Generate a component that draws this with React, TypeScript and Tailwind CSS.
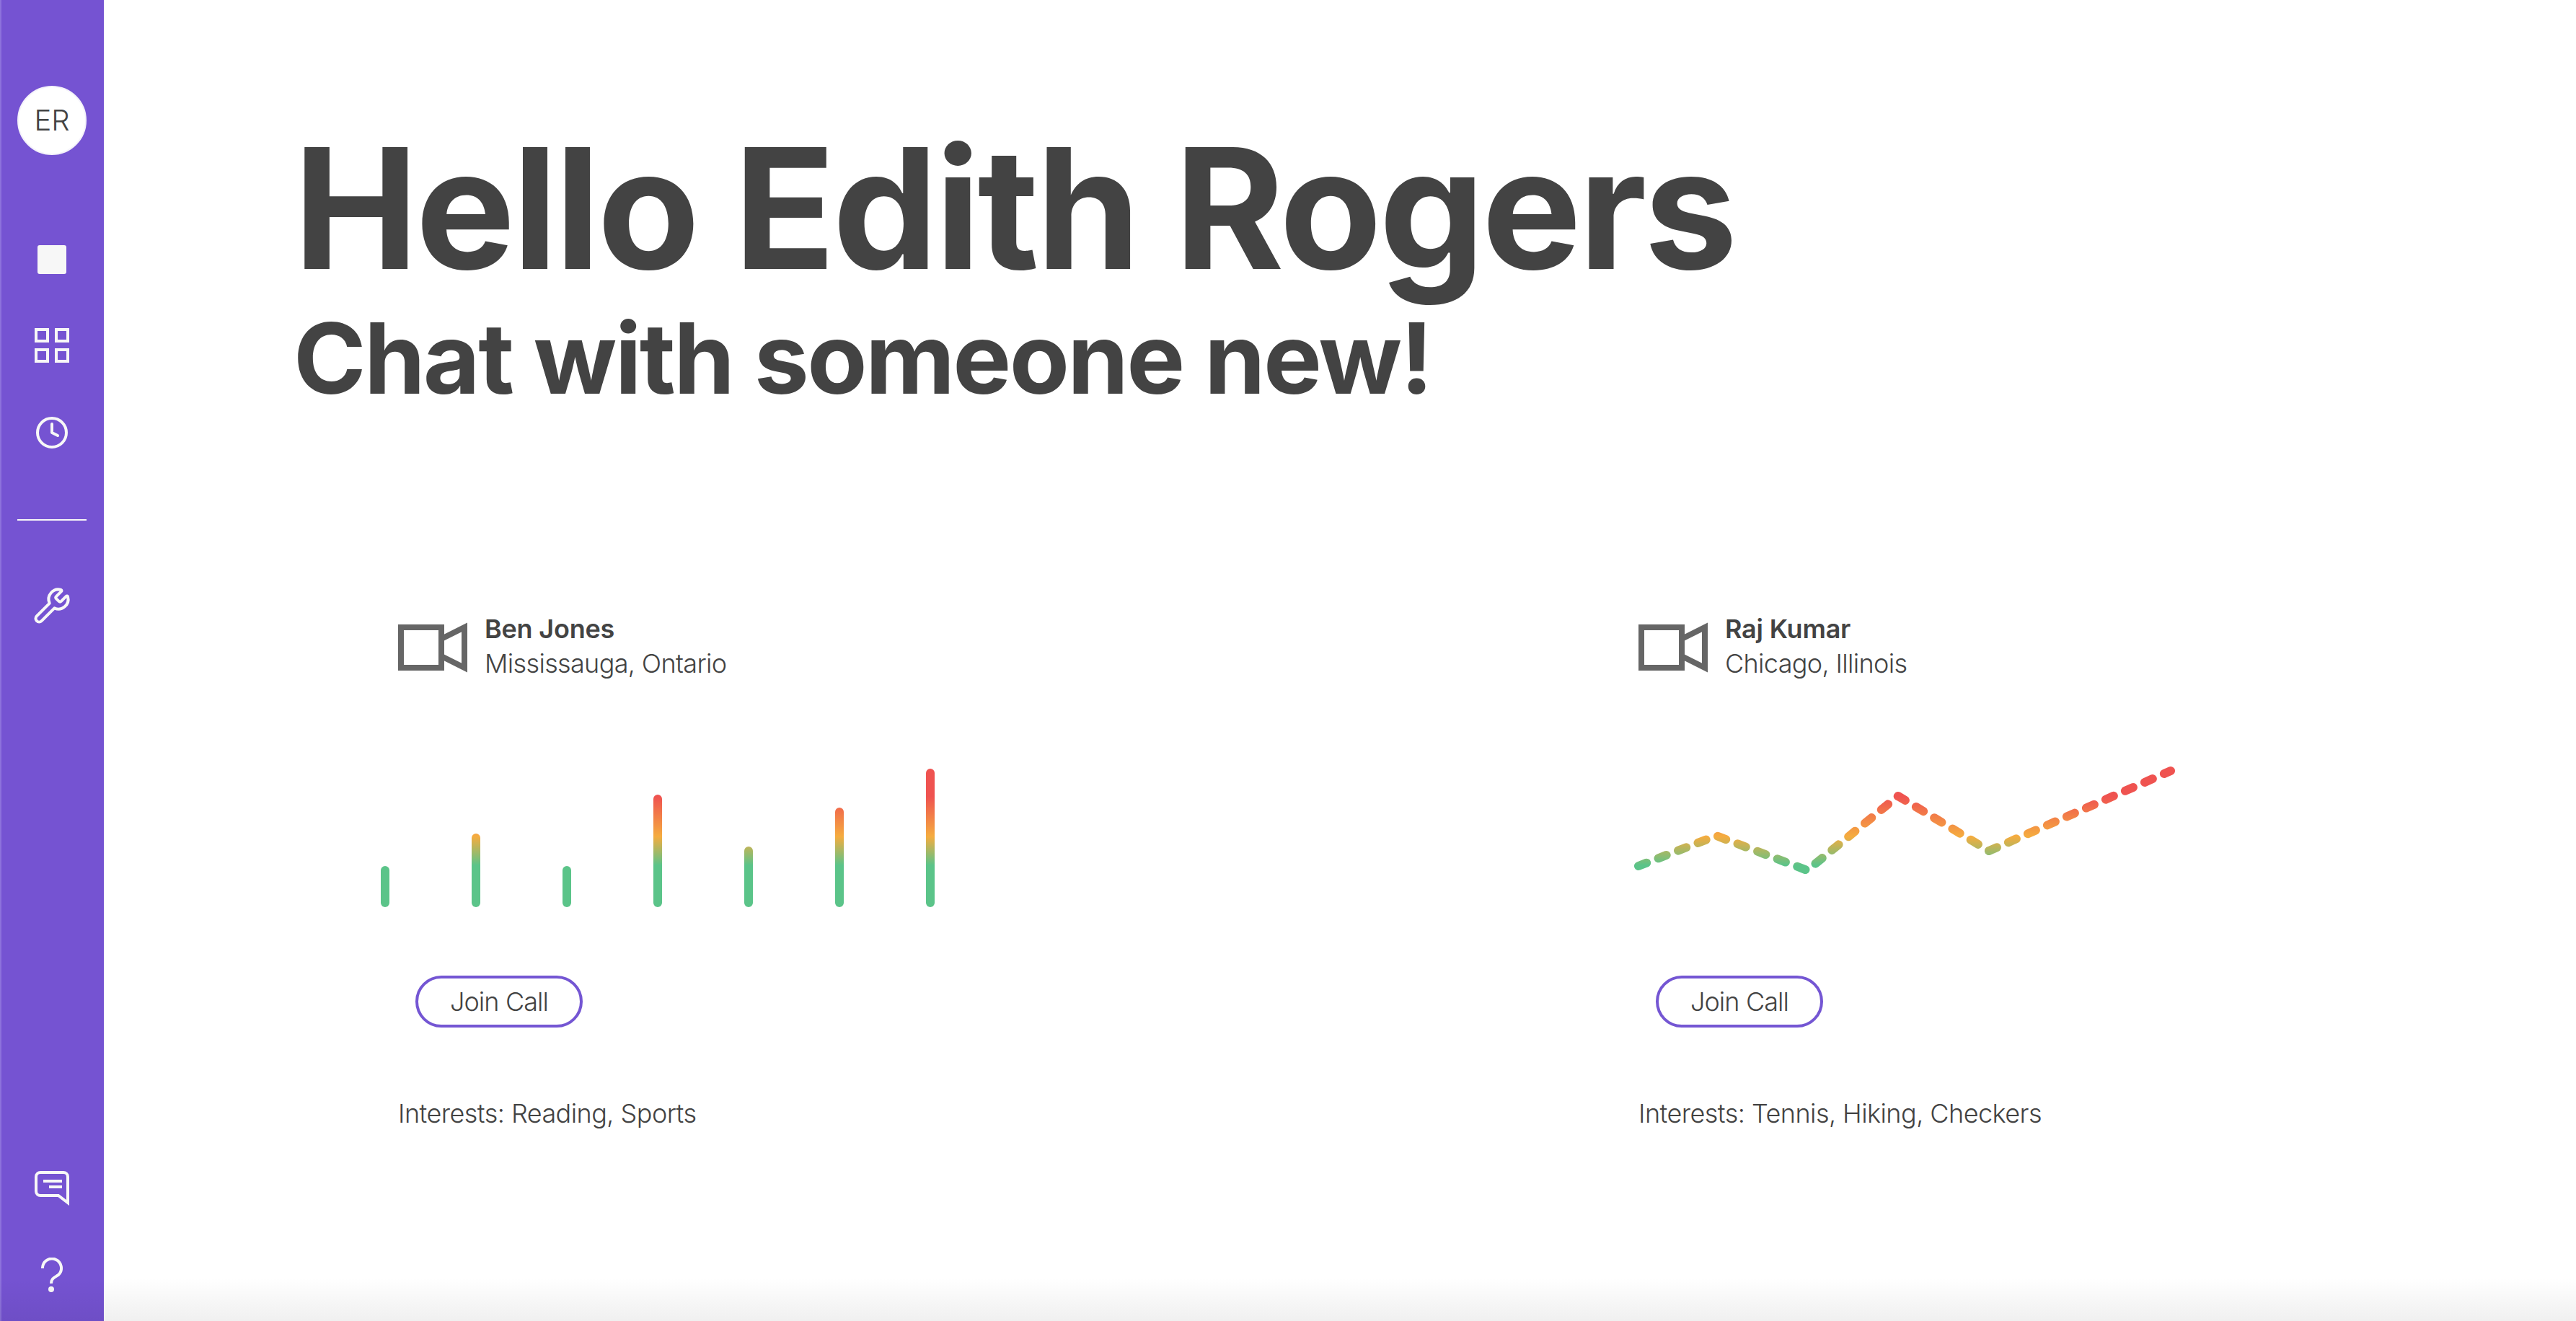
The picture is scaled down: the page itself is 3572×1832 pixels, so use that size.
import React from 'react';
import { Clock, Wrench } from 'lucide-react';

const barHeights = [57, 102, 57, 156, 84, 138, 192];

function ChartGradient({ id }: { id: string }) {
  return (
    <linearGradient id={id} gradientUnits="userSpaceOnUse" x1="0" y1="142" x2="0" y2="47">
      <stop offset="0" stopColor="#5bc489" />
      <stop offset="0.42" stopColor="#f5ac3f" />
      <stop offset="1" stopColor="#ef5350" />
    </linearGradient>
  );
}

function BarChart() {
  return (
    <svg width="780" height="210" viewBox="0 0 780 210" className="block">
      <defs>
        <ChartGradient id="barGrad" />
      </defs>
      {barHeights.map((h, i) => (
        <rect key={i} x={i * 126} y={200 - h} width="12" height={h} rx="6" fill="url(#barGrad)" />
      ))}
    </svg>
  );
}

function LineChart() {
  return (
    <svg width="780" height="210" viewBox="0 0 780 210" className="block">
      <defs>
        <ChartGradient id="lineGrad" />
      </defs>
      <polyline
        points="24,143 132,101 258,149 384,46 510,122 762,11"
        fill="none"
        stroke="url(#lineGrad)"
        strokeWidth="12"
        strokeLinecap="round"
        strokeLinejoin="round"
        strokeDasharray="12 17.5"
      />
    </svg>
  );
}

function VideoIcon() {
  return (
    <svg width="96" height="70" viewBox="0 0 96 70" fill="none" stroke="#666666" strokeWidth="8" className="shrink-0 mt-[4px]">
      <rect x="4" y="7" width="56" height="56" />
      <path d="M62 22 L92 7 V63 L62 48" />
    </svg>
  );
}

function CallCard({ name, place, interests, chart }: { name: string; place: string; interests: string; chart: React.ReactNode }) {
  return (
    <div className="w-[1720px]">
      <div className="flex items-center gap-[24px]">
        <VideoIcon />
        <div>
          <p className="text-[36px] leading-[48px] font-semibold tracking-[-0.2px]">{name}</p>
          <p className="text-[36px] leading-[48px] font-[350] tracking-[-0.65px]">{place}</p>
        </div>
      </div>
      <div className="mt-[114px] -ml-[24px]">{chart}</div>
      <button className="block ml-[24px] mt-[85px] w-[232px] h-[72px] rounded-full border-4 border-[#7456d3] text-[36px] leading-none font-[350] tracking-[-0.9px]">
        Join Call
      </button>
      <p className="mt-[95px] text-[36px] leading-[48px] font-[350] tracking-[-0.55px]">Interests: {interests}</p>
    </div>
  );
}

export default function App() {
  return (
    <div className="relative flex h-[1832px] overflow-hidden bg-white text-[#434343] font-['Inter',sans-serif]">
      {/* Sidebar */}
      <aside className="w-[144px] shrink-0 bg-[#7553d2] border-l-2 border-[#8d72dc] flex flex-col items-center pt-[119px] pb-[40px] pr-[2px]">
        <div className="w-[96px] h-[96px] rounded-full bg-white border-2 border-[#f4f2fa] flex items-center justify-center text-[40px] font-[350]">ER</div>
        <div className="mt-[125px] w-[40px] h-[40px] rounded-[3px] bg-[#f7f7f7]" />
        <svg width="48" height="48" viewBox="0 0 48 48" fill="none" stroke="#f7f7f7" strokeWidth="4" className="mt-[75px]">
          <rect x="2" y="2" width="16" height="16" />
          <rect x="30" y="2" width="16" height="16" />
          <rect x="2" y="30" width="16" height="16" />
          <rect x="30" y="30" width="16" height="16" />
        </svg>
        <Clock size={48} strokeWidth={2} color="#f7f7f7" className="mt-[73px]" />
        <div className="mt-[96px] w-[96px] h-[2px] bg-[#f7f7f7]" />
        <Wrench size={54} strokeWidth={1.8} color="#f7f7f7" className="mt-[91px]" />
        <svg width="48" height="48" viewBox="0 0 48 48" fill="none" stroke="#f7f7f7" strokeWidth="4" className="mt-auto">
          <path d="M8 2 H40 A6 6 0 0 1 46 8 V44 L33 34 H8 A6 6 0 0 1 2 28 V8 A6 6 0 0 1 8 2 Z" />
          <path d="M12 14 H38 M20 22 H38" />
        </svg>
        <svg width="30" height="48" viewBox="0 0 30 48" fill="none" stroke="#f7f7f7" strokeWidth="4" className="mt-[72px]">
          <path d="M2 15 A13 13 0 1 1 24 24 C18 28 14 29 14 36" />
          <circle cx="14" cy="44" r="4" fill="#f7f7f7" stroke="none" />
        </svg>
      </aside>

      {/* Main */}
      <main className="flex-1">
        <div className="pl-[263px] pt-[173px]">
          <h1 className="text-[232px] leading-[232px] font-bold tracking-[-4px]">Hello Edith Rogers</h1>
          <h2 className="mt-[24px] text-[136px] leading-[136px] font-bold tracking-[-2.7px]">Chat with someone new!</h2>
        </div>
        <div className="mt-[283px] pl-[408px] flex">
          <CallCard name="Ben Jones" place="Mississauga, Ontario" interests="Reading, Sports" chart={<BarChart />} />
          <CallCard name="Raj Kumar" place="Chicago, Illinois" interests="Tennis, Hiking, Checkers" chart={<LineChart />} />
        </div>
      </main>

      {/* Bottom fade */}
      <div className="absolute inset-x-0 bottom-0 h-[60px] pointer-events-none bg-gradient-to-b from-transparent to-black/6" />
    </div>
  );
}
